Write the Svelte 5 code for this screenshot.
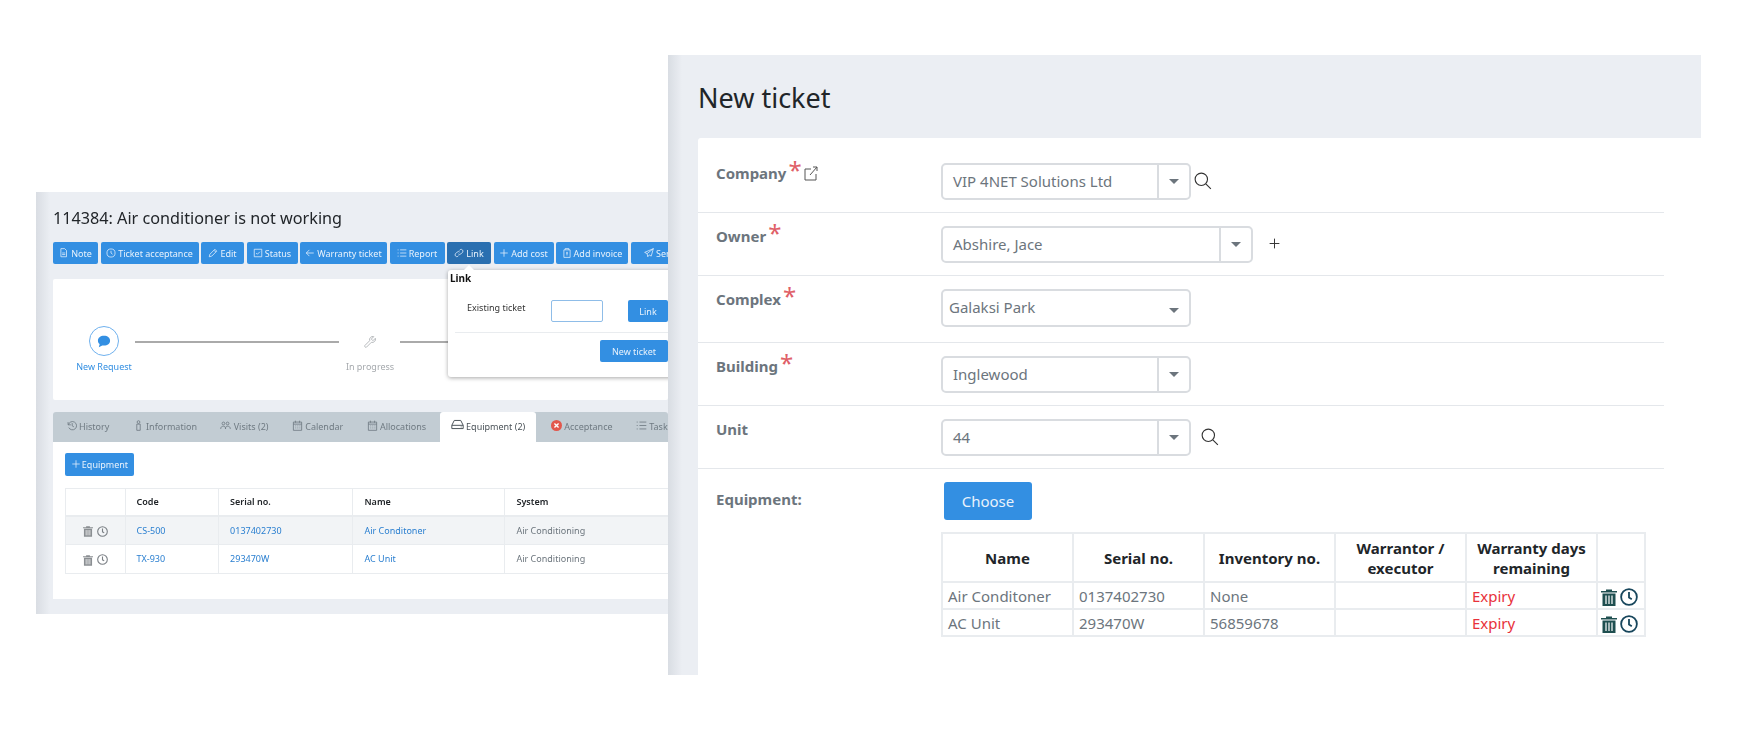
<script>
  const icons = {
    note: 'M3 1h6l3 3v10H3z M5 8h5 M5 10.5h5',
    clock: 'M8 1.5a6.5 6.5 0 1 0 0 13a6.5 6.5 0 1 0 0-13z M8 4.5V8l2.5 2',
    edit: 'M2 14l1-4 8-8 3 3-8 8z M9.5 3.5l3 3',
    check: 'M2 2h12v12H2z M5 8l2 2 4-4',
    back: 'M14 8H2 M7 3L2 8l5 5',
    list: 'M5 3h10 M5 8h10 M5 13h10 M1 3h1.5 M1 8h1.5 M1 13h1.5',
    link: 'M7 9.5a3 3 0 0 0 4 0l3-3a3 3 0 0 0-4-4l-1.5 1.5 M9 6.500a3 3 0 0 0-4 0l-3 3a3 3 0 0 0 4 4l1.500-1.500',
    plus: 'M8 2v12 M2 8h12',
    invoice: 'M3 3h10v12H3z M5 3V1h6v2 M8 6v6 M6.500 8h3',
    send: 'M15 1L1 7l4 2 1 5 2.500-3 3 2z M5 9l10-8',
    history: 'M3 3v4h4 M3.500 7a6 6 0 1 1 .5 4 M9 4.500V8.500l2.500 1.500',
    info: 'M8 1a2 2 0 1 0 0 4a2 2 0 1 0 0-4z M5.500 6h5v9h-5z',
    users: 'M5 3a2 2 0 1 0 0 4a2 2 0 1 0 0-4z M11 3a2 2 0 1 0 0 4a2 2 0 1 0 0-4z M1 13c0-3 2-4 4-4s3 1 3 4 M8 13c0-3 1-4 3-4s4 1 4 4',
    calendar: 'M2 3h12v12H2z M2 6h12 M5 1v3 M11 1v3 M5 8.500h1 M8 8.500h1 M11 8.500h1 M5 11.500h1 M8 11.500h1 M11 11.500h1',
    drive: 'M1 9l3-6h8l3 6v4H1z M1 9h14 M12 11h1',
    wrench: 'M14 4l-3 3-2-2 3-3a4 4 0 0 0-5 5l-6 6a1.500 1.500 0 0 0 2 2l6-6a4 4 0 0 0 5-5z',
    external: 'M8 3H2v11h11V8 M7 9l7-8 M10 1h4v4',
    search: 'M6.500 1a5.500 5.500 0 1 0 0 11a5.500 5.500 0 1 0 0-11z M10.500 10.500L15 15'
  }

  const actions = [
    { label: 'Note', icon: 'note', w: 45 },
    { label: 'Ticket acceptance', icon: 'clock', w: 98 },
    { label: 'Edit', icon: 'edit', w: 43 },
    { label: 'Status', icon: 'check', w: 51 },
    { label: 'Warranty ticket', icon: 'back', w: 87 },
    { label: 'Report', icon: 'list', w: 55 },
    { label: 'Link', icon: 'link', w: 44, active: true },
    { label: 'Add cost', icon: 'plus', w: 60 },
    { label: 'Add invoice', icon: 'invoice', w: 72 },
    { label: 'Send', icon: 'send', w: 60 }
  ]

  const tabs = [
    { label: 'History', icon: 'history' },
    { label: 'Information', icon: 'info' },
    { label: 'Visits (2)', icon: 'users' },
    { label: 'Calendar', icon: 'calendar' },
    { label: 'Allocations', icon: 'calendar' },
    { label: 'Equipment (2)', icon: 'drive', active: true },
    { label: 'Acceptance', icon: 'cross' },
    { label: 'Tasks', icon: 'list' }
  ]

  const equipment = [
    { code: 'CS-500', serial: '0137402730', name: 'Air Conditoner', system: 'Air Conditioning', inventory: 'None' },
    { code: 'TX-930', serial: '293470W', name: 'AC Unit', system: 'Air Conditioning', inventory: '56859678' }
  ]

  const fields = [
    { label: 'Company', value: 'VIP 4NET Solutions Ltd', req: true, ext: true, search: 3 },
    { label: 'Owner', value: 'Abshire, Jace', req: true, wide: true, add: true },
    { label: 'Complex', value: 'Galaksi Park', req: true, native: true },
    { label: 'Building', value: 'Inglewood', req: true },
    { label: 'Unit', value: '44', search: 10 }
  ]
</script>

{#snippet icon(name, size = 10, weight = 1.2)}
  <svg class="ico" width={size} height={size} viewBox="0 0 16 16" fill="none" stroke="currentColor" stroke-width={weight}>
    <path d={icons[name]} />
  </svg>
{/snippet}

{#snippet trash(cls)}
  <svg class={cls} viewBox="0 0 16 18">
    <path d="M0 3h16v1.500H0z M5 1.500h6V3H5z M1.500 5.500h13V18h-13z" fill="currentColor" />
    <path d="M5 7.500V16 M8 7.500V16 M11 7.500V16" stroke="#fff" stroke-width="1.200" />
  </svg>
{/snippet}

{#snippet clock(cls)}
  <svg class={cls} viewBox="0 0 16 16" fill="none" stroke="currentColor" stroke-width="1.600">
    <circle cx="8" cy="8" r="7" />
    <path d="M8 3.500V8.500L10.500 10" />
  </svg>
{/snippet}

<main class="desk">
  <section class="win ticket">
    <h2>114384: Air conditioner is not working</h2>
    <div class="actions">
      {#each actions as a}
        <button class="btn" class:active={a.active} style="flex-basis: {a.w}px">
          {@render icon(a.icon)}{a.label}
        </button>
      {/each}
    </div>

    <div class="steps">
      <div class="step current">
        <span class="bubble">
          <svg width="14" height="13" viewBox="0 0 16 15"><path d="M8 1C3.800 1 1 3.400 1 6.500c0 1.600.8 3 2 4L2 14l4-2c.6.100 1.300.2 2 .2 4.200 0 7-2.600 7-5.700S12.200 1 8 1z" fill="currentColor" /></svg>
        </span>
        <span>New Request</span>
      </div>
      <div class="track first"></div>
      <div class="step">
        <span class="bubble plain">{@render icon('wrench', 13)}</span>
        <span>In progress</span>
      </div>
      <div class="track"></div>
    </div>

    <div class="tabs">
      {#each tabs as t}
        <div class="tab" class:active={t.active}>
          {#if t.icon === 'cross'}
            <svg class="ico" width="11" height="11" viewBox="0 0 16 16"><circle cx="8" cy="8" r="8" fill="#e2574c" /><path d="M5 5l6 6 M11 5l-6 6" stroke="#fff" stroke-width="2" /></svg>
          {:else}
            {@render icon(t.icon, t.icon === 'drive' ? 13 : 11)}
          {/if}
          {t.label}
        </div>
      {/each}
    </div>
    <div class="pane">
      <button class="btn add">{@render icon('plus')}Equipment</button>
      <table class="small">
        <thead>
          <tr><th></th><th>Code</th><th>Serial no.</th><th>Name</th><th>System</th></tr>
        </thead>
        <tbody>
          {#each equipment as e}
            <tr>
              <td class="tools">{@render trash('s-trash')}{@render clock('s-clock')}</td>
              <td><a href="#top">{e.code}</a></td>
              <td><a href="#top">{e.serial}</a></td>
              <td><a href="#top">{e.name}</a></td>
              <td>{e.system}</td>
            </tr>
          {/each}
        </tbody>
      </table>
    </div>

    <div class="popover">
      <span class="caret"></span>
      <strong>Link</strong>
      <div class="pop-row">
        <span>Existing ticket</span>
        <input type="text" />
        <button class="btn">Link</button>
      </div>
      <div class="pop-foot"><button class="btn">New ticket</button></div>
    </div>
  </section>

  <section class="win create">
    <h1>New ticket</h1>
    <div class="form">
      {#each fields as f}
        <div class="row">
          <div class="label">
            {f.label}{#if f.req}<span class="req">*</span>{/if}
            {#if f.ext}<span class="ext">{@render icon('external', 16, 1)}</span>{/if}
          </div>
          <div class="select" class:wide={f.wide} class:native={f.native}>
            <span class="value">{f.value}</span>
            <span class="arrow"></span>
          </div>
          {#if f.search}<span class="search" style="margin-left: {f.search}px">{@render icon('search', 18, 1)}</span>{/if}
          {#if f.add}<span class="plus">{@render icon('plus', 13)}</span>{/if}
        </div>
      {/each}
      <div class="row last">
        <div class="label equip">Equipment:</div>
        <div class="col">
          <button class="btn choose">Choose</button>
          <table class="large">
            <thead>
              <tr>
                <th>Name</th><th>Serial no.</th><th>Inventory no.</th>
                <th>Warrantor / executor</th><th>Warranty days remaining</th><th></th>
              </tr>
            </thead>
            <tbody>
              {#each equipment as e}
                <tr>
                  <td>{e.name}</td>
                  <td>{e.serial}</td>
                  <td>{e.inventory}</td>
                  <td></td>
                  <td class="expiry">Expiry</td>
                  <td class="tools">{@render trash('l-trash')}{@render clock('l-clock')}</td>
                </tr>
              {/each}
            </tbody>
          </table>
        </div>
      </div>
    </div>
  </section>
</main>

<style>
  :global(body) {
    margin: 0;
    background: #fff;
  }

  .desk {
    position: relative;
    width: 1751px;
    height: 747px;
    overflow: hidden;
    font-family: "Noto Sans", "Open Sans", sans-serif;
    color: #212529;
  }

  /* the two overlapping screens sit on a free canvas */
  .win {
    position: absolute;
    box-sizing: border-box;
    background: linear-gradient(90deg, #d9dde3, #ebeef3 14px);
    overflow: hidden;
  }

  .ticket {
    left: 36px;
    top: 192px;
    width: 632px;
    height: 422px;
    padding: 13px 0 0 17px;
    filter: blur(0.35px);
  }

  .create {
    left: 668px;
    top: 55px;
    width: 1033px;
    height: 620px;
    padding-left: 30px;
  }

  h2 {
    margin: 0 0 11px;
    font-size: 16.2px;
    line-height: 26px;
    font-weight: 400;
  }

  h1 {
    margin: 0;
    height: 83px;
    font-size: 27px;
    line-height: 85px;
    font-weight: 400;
    color: #212529;
  }

  .ico {
    flex: none;
    vertical-align: -1px;
  }

  .btn {
    display: inline-flex;
    align-items: center;
    justify-content: center;
    gap: 2px;
    height: 22px;
    padding: 0;
    border: 0;
    border-radius: 2px;
    background: #338fe2;
    color: #e8f2fc;
    font: 9px/1 "Noto Sans", sans-serif;
    white-space: nowrap;
  }

  .btn.active {
    background: #2a6fb0;
  }

  .actions {
    display: flex;
    gap: 2.5px;
    width: 640px;
  }

  .actions .btn {
    flex-grow: 0;
    flex-shrink: 0;
  }

  .steps {
    display: flex;
    align-items: flex-start;
    height: 121px;
    margin-top: 15px;
    padding: 47px 0 0 30px;
    box-sizing: border-box;
    background: #fff;
    border-radius: 2px;
  }

  .step {
    display: flex;
    flex-direction: column;
    align-items: center;
    gap: 5px;
    width: 42px;
    font-size: 9px;
    line-height: 12px;
    color: #a5a9ad;
    white-space: nowrap;
  }

  .step.current {
    color: #338fe2;
  }

  .bubble {
    display: flex;
    align-items: center;
    justify-content: center;
    width: 28px;
    height: 28px;
    border: 1px solid #6fb1ee;
    border-radius: 50%;
    background: #fff;
  }

  .bubble.plain {
    border-color: transparent;
    color: #b5b8bb;
  }

  .track {
    flex: 0 0 260px;
    height: 2px;
    margin: 15px 0 0 9px;
    background: #aaa;
  }

  .track.first {
    flex-basis: 204px;
    margin-left: 10px;
    margin-right: 10px;
  }

  .tabs {
    display: flex;
    height: 30px;
    margin-top: 12px;
    padding-left: 1px;
    background: #c2ccd3;
    border-radius: 3px 3px 0 0;
    white-space: nowrap;
  }

  .tab {
    flex: none;
    padding: 0 11.7px;
    line-height: 30px;
    font-size: 9px;
    color: #6f7a82;
  }

  .tab.active {
    padding: 0 11px;
    margin: 0 3px 0 2px;
    background: #fff;
    border-radius: 3px 3px 0 0;
    color: #4a5258;
  }

  .pane {
    height: 157px;
    box-sizing: border-box;
    padding: 10px 0 0 12px;
    background: #fff;
    overflow: hidden;
  }

  .btn.add {
    width: 69px;
    height: 23px;
    gap: 1px;
  }

  table {
    border-collapse: collapse;
    table-layout: fixed;
  }

  .small {
    width: 660px;
    margin-top: 12px;
    font-size: 9px;
    color: #6c757d;
  }

  .small th,
  .small td {
    height: 27.5px;
    padding: 0 0 0 11px;
    border: 1px solid #e9ecef;
    text-align: left;
  }

  .small th {
    height: 26px;
    border-bottom-width: 2px;
    font-weight: 600;
    color: #212529;
  }

  .small th:nth-child(1) { width: 47.5px; }
  .small th:nth-child(2) { width: 81.6px; }
  .small th:nth-child(3) { width: 122.4px; }
  .small th:nth-child(4) { width: 140px; }

  .small tbody tr:first-child {
    background: #f2f4f6;
  }

  .small a {
    color: #2a7fd0;
    text-decoration: none;
  }

  .small .tools {
    padding: 0;
    text-align: center;
    color: #7a7f84;
  }

  .s-trash {
    width: 10px;
    height: 12px;
    margin-right: 4px;
    vertical-align: middle;
    color: #8a8e92;
  }

  .s-clock {
    width: 11px;
    height: 11px;
    vertical-align: middle;
  }

  .popover {
    position: absolute;
    left: 412px;
    top: 78px;
    width: 240px;
    height: 107px;
    box-sizing: border-box;
    padding: 1px 0 0 2px;
    background: #fff;
    border-radius: 3px;
    box-shadow: 0 1px 4px rgba(0, 0, 0, 0.35);
    font-size: 9px;
  }

  .caret {
    position: absolute;
    left: 16px;
    top: -5px;
    border: 5px solid transparent;
    border-top: 0;
    border-bottom-color: #fff;
  }

  .popover strong {
    display: block;
    font-size: 10px;
    line-height: 14px;
    color: #111;
  }

  .pop-row {
    display: flex;
    align-items: flex-start;
    width: 230px;
    height: 33px;
    margin: 15px 0 0 5px;
    padding-left: 12px;
    box-sizing: border-box;
    border-bottom: 1px solid #e9ecef;
    color: #333;
    line-height: 13px;
  }

  .pop-row span {
    flex: 0 0 84px;
    margin-top: 1px;
  }

  .pop-row input {
    width: 52px;
    height: 22px;
    padding: 0;
    margin: 0 25px 0 0;
    box-sizing: border-box;
    border: 1px solid #8fbde8;
    border-radius: 2px;
    background: #fff;
  }

  .pop-row .btn {
    flex: none;
    width: 40px;
  }

  .pop-foot {
    width: 218px;
    margin-top: 7px;
    text-align: right;
  }

  .pop-foot .btn {
    width: 68px;
  }

  .form {
    height: 537px;
    width: 1003px;
    background: #fff;
    border-radius: 3px 0 0 0;
  }

  .row {
    display: flex;
    align-items: flex-start;
    width: 966px;
    box-sizing: border-box;
    padding: 13px 0 12px 18px;
    border-bottom: 1px solid #e4e7eb;
  }

  .row:first-child {
    padding-top: 25px;
  }

  .row.last {
    border: 0;
  }

  .label {
    flex: 0 0 225px;
    display: flex;
    align-items: flex-start;
    font-size: 15px;
    line-height: 21px;
    font-weight: 700;
    color: #6c757d;
  }

  .label.equip {
    margin-top: 7px;
  }

  .req {
    height: 21px;
    margin: -4px 0 0 2px;
    font-size: 24px;
    line-height: 22px;
    font-weight: 400;
    color: #df5f68;
  }

  .ext {
    margin: 2px 0 0 1px;
    height: 16px;
    font-weight: 400;
    color: #555;
  }

  .select {
    position: relative;
    flex: 0 0 250px;
    box-sizing: border-box;
    height: 37px;
    padding-left: 10px;
    border: 2px solid #d9dce0;
    border-radius: 5px;
    font-size: 15px;
    line-height: 32px;
    color: #6c757d;
    background: #fff;
  }

  .select.wide {
    flex-basis: 312px;
  }

  .select.native {
    height: 38px;
    padding-left: 6px;
    margin-bottom: 3px;
  }

  .arrow {
    position: absolute;
    top: 0;
    right: 0;
    width: 30px;
    height: 33px;
    border-left: 2px solid #d9dce0;
  }

  .arrow::after {
    content: "";
    position: absolute;
    left: 10px;
    top: 14px;
    border: 5px solid transparent;
    border-top-color: #6c757d;
    border-bottom: 0;
  }

  .native .arrow {
    border-left: 0;
  }

  .native .arrow::after {
    top: 17px;
  }

  .search {
    display: flex;
    margin-top: 9px;
    color: #333;
  }

  .plus {
    display: flex;
    margin: 11px 0 0 15px;
    color: #333;
  }

  .col {
    display: flex;
    flex-direction: column;
    align-items: flex-start;
  }

  .btn.choose {
    width: 88px;
    height: 38px;
    margin-left: 3px;
    border-radius: 3px;
    font-size: 15px;
    color: #e8f2fc;
  }

  .large {
    width: 705px;
    margin-top: 12px;
    font-size: 15px;
    color: #6c757d;
  }

  .large th,
  .large td {
    border: 2px solid #e9ecef;
    padding: 0 0 0 5px;
    height: 25px;
    line-height: 20px;
    text-align: left;
  }

  .large th {
    height: 47px;
    padding: 0;
    text-align: center;
    font-weight: 700;
    color: #212529;
  }

  .large th:nth-child(1),
  .large th:nth-child(2),
  .large th:nth-child(3),
  .large th:nth-child(4),
  .large th:nth-child(5) {
    width: 129px;
  }

  .expiry {
    color: #e8313b;
  }

  .large .tools {
    padding: 0 0 0 3px;
    white-space: nowrap;
  }

  .l-trash {
    width: 16px;
    height: 18px;
    margin-right: 3px;
    vertical-align: middle;
    color: #1f4f50;
  }

  .l-clock {
    width: 18px;
    height: 18px;
    vertical-align: middle;
    color: #17465c;
  }
</style>
